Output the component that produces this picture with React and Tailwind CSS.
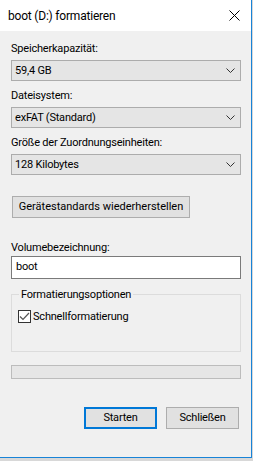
import { useState } from "react";

const font = { fontFamily: 'Roboto, "Segoe UI", sans-serif' };

function Chevron() {
  return (
    <svg width="9" height="5" viewBox="0 0 9 5" className="block">
      <path d="M0.5 0.5 L4.5 4.5 L8.5 0.5" fill="none" stroke="#333" strokeWidth="1" />
    </svg>
  );
}

function Select({ value }) {
  return (
    <div className="h-[21px] w-[230px] border border-[#acacac] bg-[#e5e5e5] flex items-center justify-between pl-[3px] pr-[5px]">
      <span className="leading-[15px] text-black whitespace-nowrap">{value}</span>
      <Chevron />
    </div>
  );
}

function Label({ children, className }) {
  return (
    <div className={"leading-[15px] text-black whitespace-nowrap " + (className || "")}>{children}</div>
  );
}

export default function App() {
  const [quick, setQuick] = useState(true);

  return (
    <div className="w-[253px] h-[461px] bg-[#d8d8d8] text-[11px] tracking-[-0.2px]" style={font}>
      <div className="w-[252px] h-[458px] bg-[#f0f0f0] border-r border-b border-[#1883d7] flex flex-col">
        {/* title bar */}
        <div className="h-[31px] bg-white flex items-center justify-between pl-[8px] pr-[10px] shrink-0">
          <span className="text-[12px] text-black whitespace-nowrap">boot (D:) formatieren</span>
          <svg width="11" height="11" viewBox="0 0 11 11" className="mr-[1px]">
            <path d="M0.5 0.5 L10.5 10.5 M10.5 0.5 L0.5 10.5" stroke="#000" strokeWidth="1" />
          </svg>
        </div>

        <div className="pl-[11px] pr-[10px] flex flex-col">
          <Label className="mt-[10px]">Speicherkapazität:</Label>
          <div className="mt-[4px]"><Select value="59,4 GB" /></div>

          <Label className="mt-[7px]">Dateisystem:</Label>
          <div className="mt-[4px]"><Select value="exFAT (Standard)" /></div>

          <Label className="mt-[7px]">Größe der Zuordnungseinheiten:</Label>
          <div className="mt-[4px]"><Select value="128 Kilobytes" /></div>

          <button className="mt-[21px] ml-[1px] h-[22px] w-[178px] border border-[#adadad] bg-[#e1e1e1] text-black tracking-normal whitespace-nowrap flex items-center justify-center">
            Gerätestandards wiederherstellen
          </button>

          <Label className="mt-[22px]">Volumebezeichnung:</Label>
          <div className="mt-[1px] h-[23px] w-[230px] border border-[#7a7a7a] bg-white flex items-center pl-[4px] text-black">
            boot
          </div>

          {/* group box */}
          <div className="relative mt-[15px] h-[58px] w-[230px] border border-[#dcdcdc]">
            <span className="absolute -top-[8px] left-[7px] px-[2px] bg-[#f0f0f0] leading-[15px] text-black whitespace-nowrap">
              Formatierungsoptionen
            </span>
            <label className="flex items-center mt-[14px] ml-[6px] cursor-pointer" onClick={() => setQuick(!quick)}>
              <span className="w-[13px] h-[13px] border border-[#333] bg-white flex items-center justify-center">
                {quick && (
                  <svg width="11" height="9" viewBox="0 0 11 9">
                    <path d="M1 4.5 L4 7.5 L10 1" fill="none" stroke="#555" strokeWidth="1.2" />
                  </svg>
                )}
              </span>
              <span className="ml-[2px] leading-[15px] text-black whitespace-nowrap">Schnellformatierung</span>
            </label>
          </div>

          {/* progress */}
          <div className="mt-[13px] h-[14px] w-[230px] border border-[#bcbcbc] bg-[#e6e6e6]" />

          <div className="mt-[28px] flex justify-end gap-[9px] pr-[2px]">
            <button className="h-[22px] w-[73px] border-2 border-[#0078d7] bg-[#e1e1e1] text-black flex items-center justify-center">
              Starten
            </button>
            <button className="h-[22px] w-[73px] border border-[#adadad] bg-[#e1e1e1] text-black flex items-center justify-center">
              Schließen
            </button>
          </div>
        </div>
      </div>
    </div>
  );
}
